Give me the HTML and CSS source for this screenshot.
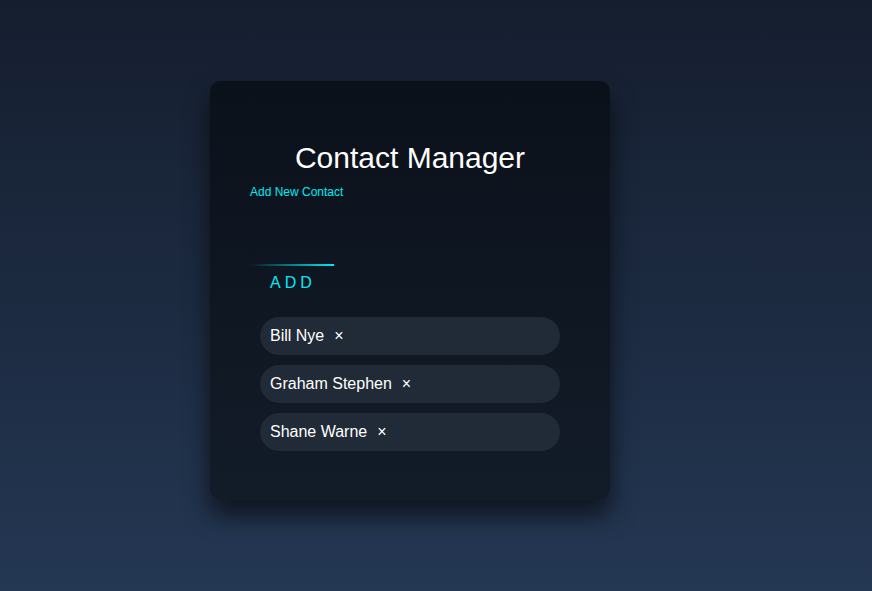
FILE: index.html
```html
<!DOCTYPE html>
<html>
<head>
<meta charset="utf-8">
<link rel="stylesheet" href="styles.css">
</head>
<body>
<div class="card">
  <h1 class="title">Contact Manager</h1>
  <div class="subtitle">Add New Contact</div>
  <button class="neon-btn"><span class="line"></span>ADD</button>
  <ul class="contacts">
    <li class="contact"><span class="name">Bill Nye</span><span class="remove">×</span></li>
    <li class="contact"><span class="name">Graham Stephen</span><span class="remove">×</span></li>
    <li class="contact"><span class="name">Shane Warne</span><span class="remove">×</span></li>
  </ul>
</div>
</body>
</html>
```
FILE: styles.css
```css
html, body {
  margin: 0;
  padding: 0;
  height: 100%;
}
body {
  background: linear-gradient(to bottom, #151e2f 0%, #1c2a40 50%, #243753 100%);
  font-family: "Liberation Sans", Arial, sans-serif;
  display: flex;
  justify-content: flex-start;
  align-items: flex-start;
}
.card {
  margin: 81px 0 0 210px;
  width: 400px;
  box-sizing: border-box;
  padding: 60px 40px 49px;
  border-radius: 10px;
  background: linear-gradient(to bottom, #0b111b 0%, #121c28 100%);
  box-shadow: 0 15px 25px rgba(0, 0, 0, 0.6);
  display: flex;
  flex-direction: column;
}
.title {
  margin: 0;
  font-size: 30px;
  font-weight: normal;
  color: #ffffff;
  text-align: center;
  line-height: 34px;
}
.subtitle {
  margin-top: 10px;
  font-size: 12px;
  line-height: 14px;
  color: #03e9f4;
}
.neon-btn {
  position: relative;
  align-self: flex-start;
  margin-top: 65px;
  padding: 10px 20px;
  background: transparent;
  border: none;
  color: #03e9f4;
  font-family: "Liberation Sans", Arial, sans-serif;
  font-size: 16px;
  line-height: 18px;
  letter-spacing: 4px;
  overflow: hidden;
}
.line {
  position: absolute;
  top: 0;
  left: 0;
  width: 84px;
  height: 2px;
  background: linear-gradient(90deg, transparent, #03e9f4);
}
.contacts {
  list-style: none;
  margin: 15px 0 0;
  padding: 0;
  display: flex;
  flex-direction: column;
  align-items: center;
  gap: 10px;
}
.contact {
  width: 300px;
  height: 38px;
  box-sizing: border-box;
  padding: 0 10px 1px;
  border-radius: 19px;
  background: #212a37;
  color: #ffffff;
  font-size: 16px;
  display: flex;
  align-items: center;
  gap: 10px;
}
.remove {
  font-size: 16px;
}
```
